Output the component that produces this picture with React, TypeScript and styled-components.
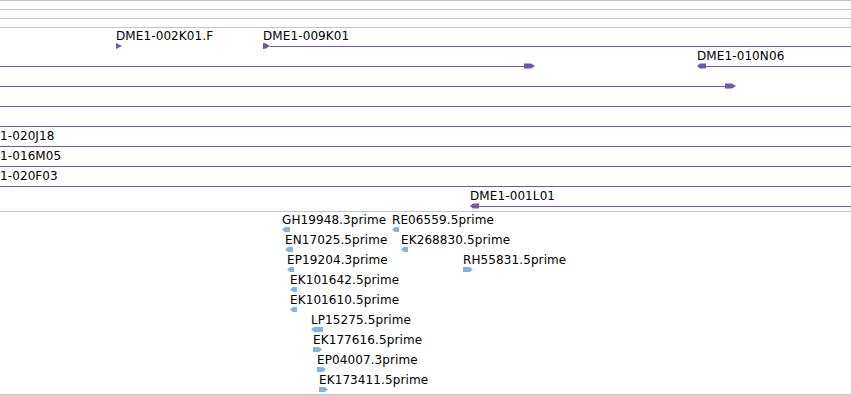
import React from "react";
import styled, { createGlobalStyle } from "styled-components";

const Global = createGlobalStyle`
  html, body { margin: 0; padding: 0; background: #ffffff; }
  body { font-family: "DejaVu Sans", "Liberation Sans", sans-serif; }
`;

const PURPLE = "#7355aa";
const BLUE = "#80b4de";
const GRID = "#c4c4c4";

const Page = styled.div`
  width: 851px;
  height: 395px;
  overflow: hidden;
  background: #ffffff;
  display: flex;
  flex-direction: column;
`;

const TopRule = styled.div`
  height: 1px;
  background: ${GRID};
  flex: none;
`;

const EmptyTrack = styled.div`
  height: 8px;
  border-bottom: 1px solid ${GRID};
  flex: none;
`;

const Track = styled.div<{ $padTop: number; $padBottom: number }>`
  flex: none;
  display: flex;
  flex-direction: column;
  padding-top: ${(p) => p.$padTop}px;
  padding-bottom: ${(p) => p.$padBottom}px;
  border-bottom: 1px solid ${GRID};
`;

const Row = styled.div`
  position: relative;
  height: 20px;
  flex: none;
`;

const Feature = styled.div`
  position: absolute;
  top: 0;
  display: flex;
  flex-direction: column;
`;

const Label = styled.div<{ $h: number }>`
  height: ${(p) => p.$h}px;
  font-family: "DejaVu Sans", "Liberation Sans", sans-serif;
  font-size: 12px;
  line-height: 12px;
  letter-spacing: 0.1px;
  color: #000;
  white-space: nowrap;
`;

const Body = styled.div`
  display: flex;
  height: 6px;
`;

const Shaft = styled.div`
  flex: 1;
  height: 1px;
  margin-top: 3px;
  background: ${PURPLE};
`;

const Head = styled.svg`
  flex: none;
  display: block;
`;

type Strand = "left" | "right" | "tiny-right" | "flag";

interface Clone {
  label?: string;
  start: number;
  end: number;
  strand?: Strand;
}

const headPoints: Record<Strand, { w: number; pts: string }> = {
  left: { w: 9, pts: "0,3 3,0.5 9,0.5 9,5.5 3,5.5" },
  right: { w: 11, pts: "0,0.5 7,0.5 11,3 7,5.5 0,5.5" },
  "tiny-right": { w: 6, pts: "0,0 6,3 0,6" },
  flag: { w: 7, pts: "0,0 3,0.5 7,3 3,5.5 0,6" },
};

const Arrow: React.FC<{ kind: Strand; color: string; h: number }> = ({ kind, color, h }) => {
  const hp = headPoints[kind];
  return (
    <Head width={hp.w} height={h} viewBox={`0 0 ${hp.w} 6`} preserveAspectRatio="none">
      <polygon points={hp.pts} fill={color} />
    </Head>
  );
};

const cloneRows: Clone[][] = [
  [
    { label: "DME1-002K01.F", start: 116, end: 122, strand: "tiny-right" },
    { label: "DME1-009K01", start: 263, end: 851, strand: "flag" },
  ],
  [
    { start: 0, end: 535, strand: "right" },
    { label: "DME1-010N06", start: 697, end: 851, strand: "left" },
  ],
  [{ start: 0, end: 736, strand: "right" }],
  [{ start: 0, end: 851 }],
  [{ start: 0, end: 851 }],
  [{ label: "1-020J18", start: 0, end: 851 }],
  [{ label: "1-016M05", start: 0, end: 851 }],
  [{ label: "1-020F03", start: 0, end: 851 }],
  [{ label: "DME1-001L01", start: 470, end: 851, strand: "left" }],
];

const CloneFeature: React.FC<{ c: Clone }> = ({ c }) => {
  const isRight = c.strand === "right";
  const isTiny = c.strand === "tiny-right";
  return (
    <Feature style={{ left: c.start, width: c.end - c.start }}>
      <Label $h={13}>{c.label ?? "\u00a0"}</Label>
      <Body>
        {c.strand && !isRight && <Arrow kind={c.strand} color={PURPLE} h={6} />}
        {!isTiny && <Shaft />}
        {isRight && <Arrow kind="right" color={PURPLE} h={6} />}
      </Body>
    </Feature>
  );
};

interface Est {
  label: string;
  x: number;
  w: number;
  dir: "l" | "r";
}

const estRows: Est[][] = [
  [
    { label: "GH19948.3prime", x: 282, w: 8, dir: "l" },
    { label: "RE06559.5prime", x: 392, w: 7, dir: "l" },
  ],
  [
    { label: "EN17025.5prime", x: 285, w: 8, dir: "l" },
    { label: "EK268830.5prime", x: 401, w: 7, dir: "l" },
  ],
  [
    { label: "EP19204.3prime", x: 287, w: 7, dir: "l" },
    { label: "RH55831.5prime", x: 463, w: 10, dir: "r" },
  ],
  [{ label: "EK101642.5prime", x: 290, w: 7, dir: "l" }],
  [{ label: "EK101610.5prime", x: 290, w: 7, dir: "l" }],
  [{ label: "LP15275.5prime", x: 311, w: 12, dir: "l" }],
  [{ label: "EK177616.5prime", x: 313, w: 9, dir: "r" }],
  [{ label: "EP04007.3prime", x: 317, w: 9, dir: "r" }],
  [{ label: "EK173411.5prime", x: 319, w: 9, dir: "r" }],
];

const EstGlyph = styled.svg`
  display: block;
  flex: none;
`;

const EstFeature: React.FC<{ e: Est }> = ({ e }) => {
  const w = e.w;
  const pts =
    e.dir === "l"
      ? `0,2.5 3,0 ${w},0 ${w},5 3,5`
      : `0,0 ${w - 3},0 ${w},2.5 ${w - 3},5 0,5`;
  return (
    <Feature style={{ left: e.x }}>
      <Label $h={13}>{e.label}</Label>
      <EstGlyph width={w} height={5} viewBox={`0 0 ${w} 5`}>
        <polygon points={pts} fill={BLUE} />
      </EstGlyph>
    </Feature>
  );
};

export default function App() {
  return (
    <>
      <Global />
      <Page>
        <TopRule />
        <EmptyTrack />
        <EmptyTrack />
        <EmptyTrack />
        <Track $padTop={2} $padBottom={1}>
          {cloneRows.map((row, i) => (
            <Row key={i}>
              {row.map((c, j) => (
                <CloneFeature key={j} c={c} />
              ))}
            </Row>
          ))}
        </Track>
        <Track $padTop={2} $padBottom={0}>
          {estRows.map((row, i) => (
            <Row key={i}>
              {row.map((e, j) => (
                <EstFeature key={j} e={e} />
              ))}
            </Row>
          ))}
        </Track>
      </Page>
    </>
  );
}
